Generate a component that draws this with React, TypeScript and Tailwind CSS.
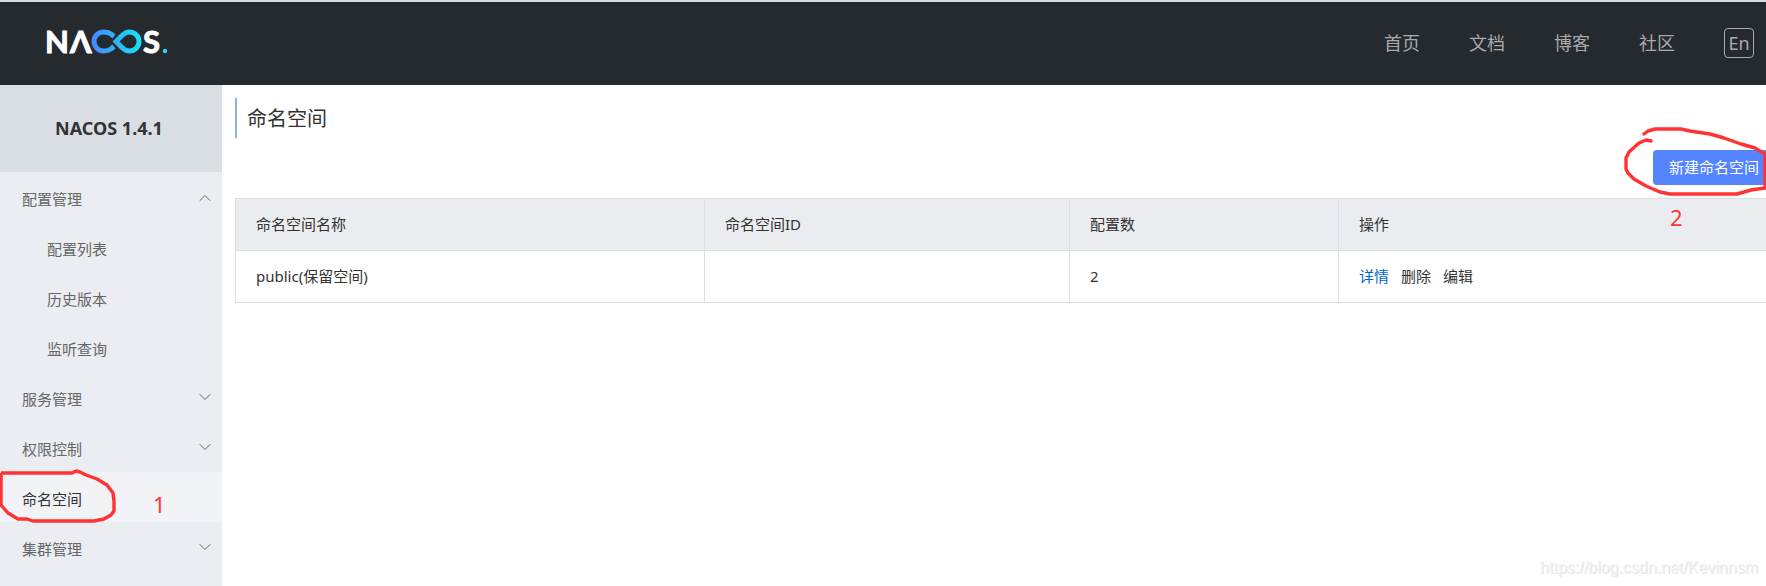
import { ChevronDown, ChevronUp } from 'lucide-react'

interface MenuItem {
  name: string
  children?: string[]
  open?: boolean
  active?: boolean
}

const navLinks = ['首页', '文档', '博客', '社区']

const menu: MenuItem[] = [
  { name: '配置管理', children: ['配置列表', '历史版本', '监听查询'], open: true },
  { name: '服务管理', children: [] },
  { name: '权限控制', children: [] },
  { name: '命名空间', active: true },
  { name: '集群管理', children: [] }
]

const namespaces = [{ name: 'public(保留空间)', id: '', count: 2 }]

export default function App() {
  return (
    <div className="flex min-h-screen flex-col overflow-x-hidden bg-white font-['Noto_Sans','Noto_Sans_CJK_SC',sans-serif] text-[15px] leading-5 text-[#333]">
      <Header />
      <div className="relative flex flex-1">
        <Sidebar />
        <main className="min-w-0 flex-1 pl-[13px] pt-[13px]">
          <h1 className="mb-3 h-10 border-l-2 border-[#87b7e0] pl-[10px] text-xl leading-[42px]">命名空间</h1>
          <div className="relative mb-[13px] flex justify-end">
            <button className="h-[35px] rounded-l bg-[#5584ff] pb-0.5 pl-4 pr-[7px] text-white">新建命名空间</button>
            <ButtonMark />
          </div>
          <NamespaceTable />
        </main>
        <span className="absolute bottom-1.5 right-2 font-['Liberation_Sans',sans-serif] text-base text-[#f3f3f3] [text-shadow:1px_1px_0_#e4e4e4]">
          https://blog.csdn.net/Kevinnsm
        </span>
      </div>
    </div>
  )
}

function Header() {
  return (
    <header className="flex h-[85px] items-center justify-between border-t-2 border-[#d9dde3] bg-[#252a2f] pl-[46px] pr-3">
      <a href="#" aria-label="Nacos">
        <Logo />
      </a>
      <nav className="flex items-center gap-[49px] pb-0.5 text-lg text-[#a8aaac]">
        {navLinks.map((link) => (
          <a key={link} href="#">{link}</a>
        ))}
        <button className="h-[30px] w-[30px] rounded-sm border border-[#a8aaac] leading-[26px]">En</button>
      </nav>
    </header>
  )
}

function Logo() {
  return (
    <svg className="block overflow-visible" width="122" height="49" viewBox="0 -11 122 49" fill="none">
      <defs>
        <linearGradient id="loop" x1="46" y1="0" x2="95" y2="0" gradientUnits="userSpaceOnUse">
          <stop stopColor="#4688ff" />
          <stop offset="1" stopColor="#17e2f5" />
        </linearGradient>
      </defs>
      <g fill="#fff" stroke="#fff" strokeWidth="1" className="font-['Lato',sans-serif] text-[31px] font-bold">
        <text x="-1" y="23">N</text>
        <text x="24" y="23">Λ</text>
        <text x="97" y="23">S</text>
      </g>
      <path
        d="M68 6.500L65 4Q62 2 57.500 2a9.500 9.500 0 0 0 0 19Q62 21 65 19L68 16.500"
        stroke="url(#loop)"
        strokeWidth="5"
      />
      <path
        d="M70 11.500L76 5.500Q79.500 2 83.500 2a9.500 9.500 0 0 1 0 19Q79.500 21 76 17.500z"
        stroke="url(#loop)"
        strokeWidth="5"
      />
      <circle cx="119" cy="21" r="2.2" fill="#17e2f5" />
    </svg>
  )
}

function Sidebar() {
  return (
    <aside className="w-[222px] shrink-0 bg-[#eaedf2]">
      <h2 className="h-[87px] bg-[#d9dde4] pr-1 text-center text-lg font-bold leading-[87px]">NACOS 1.4.1</h2>
      <ul className="text-[#666]">
        {menu.map((item) => (
          <li key={item.name} className="relative">
            {item.children ? (
              <button className="flex h-[50px] w-full items-center justify-between pl-[22px] pr-[7px] pt-1">
                {item.name}
                {item.open ? (
                  <ChevronUp className="mb-0.5" size={20} strokeWidth={1.2} />
                ) : (
                  <ChevronDown className="mb-1" size={20} strokeWidth={1.2} />
                )}
              </button>
            ) : (
              <a href="#" className="flex h-[50px] items-center bg-[#f2f3f7] pl-[22px] pt-1 text-[#333]">{item.name}</a>
            )}
            {item.open && item.children && (
              <ul>
                {item.children.map((child) => (
                  <li key={child}>
                    <a href="#" className="flex h-[50px] items-center pl-[47px] pt-1">{child}</a>
                  </li>
                ))}
              </ul>
            )}
            {item.active && <MenuMark />}
          </li>
        ))}
      </ul>
    </aside>
  )
}

function NamespaceTable() {
  return (
    <table className="w-full table-fixed border-collapse border-y border-l border-[#dcdee3] text-left">
      <thead>
        <tr className="h-[52px] bg-[#ebecf0]">
          <th className="w-[469px] border-b border-r border-[#dcdee3] px-5 pb-0.5 font-normal">命名空间名称</th>
          <th className="w-[365px] border-b border-r border-[#dcdee3] px-5 pb-0.5 font-normal">命名空间ID</th>
          <th className="w-[269px] border-b border-r border-[#dcdee3] px-5 pb-0.5 font-normal">配置数</th>
          <th className="border-b border-[#dcdee3] px-5 pb-0.5 font-normal">操作</th>
        </tr>
      </thead>
      <tbody>
        {namespaces.map((ns) => (
          <tr key={ns.name} className="h-[52px]">
            <td className="border-r border-[#dcdee3] px-5 pb-0.5">{ns.name}</td>
            <td className="border-r border-[#dcdee3] px-5 pb-0.5">{ns.id}</td>
            <td className="border-r border-[#dcdee3] px-5 pb-0.5">{ns.count}</td>
            <td className="px-5 pb-0.5">
              <div className="flex gap-3">
                <a href="#" className="text-[#0066cc]">详情</a>
                <button>删除</button>
                <button>编辑</button>
              </div>
            </td>
          </tr>
        ))}
      </tbody>
    </table>
  )
}

// hand drawn step 1, round the active menu entry
function MenuMark() {
  return (
    <svg className="pointer-events-none absolute left-0 top-0 overflow-visible" width="222" height="50" fill="none">
      <path
        d="M1 1H72L76 -1L80 0L86 3L97 7L107 13L113 21L114 29V39L111 43L104 47L94 49H33L27 47H18L8 41L1 33V1"
        stroke="#ff3333"
        strokeWidth="3.4"
        strokeLinejoin="round"
      />
      <text x="153" y="41" fill="#ff3333" className="text-[22px]">1</text>
    </svg>
  )
}

// hand drawn step 2, round the create button
function ButtonMark() {
  return (
    <svg className="pointer-events-none absolute right-0 -top-6" width="146" height="106" fill="none">
      <path
        d="M24 8L28 5L35 3H61L70 5L90 8L104 12L121 18L135 22L145 28V62L131 64L117 68H50L40 66L26 60L14 53L8 47L6 43V32L9 26L19 17L26 14L31 15"
        stroke="#ff3333"
        strokeWidth="3.4"
        strokeLinecap="round"
        strokeLinejoin="round"
      />
      <text x="50" y="100" fill="#ff3333" className="text-[22px]">2</text>
    </svg>
  )
}
